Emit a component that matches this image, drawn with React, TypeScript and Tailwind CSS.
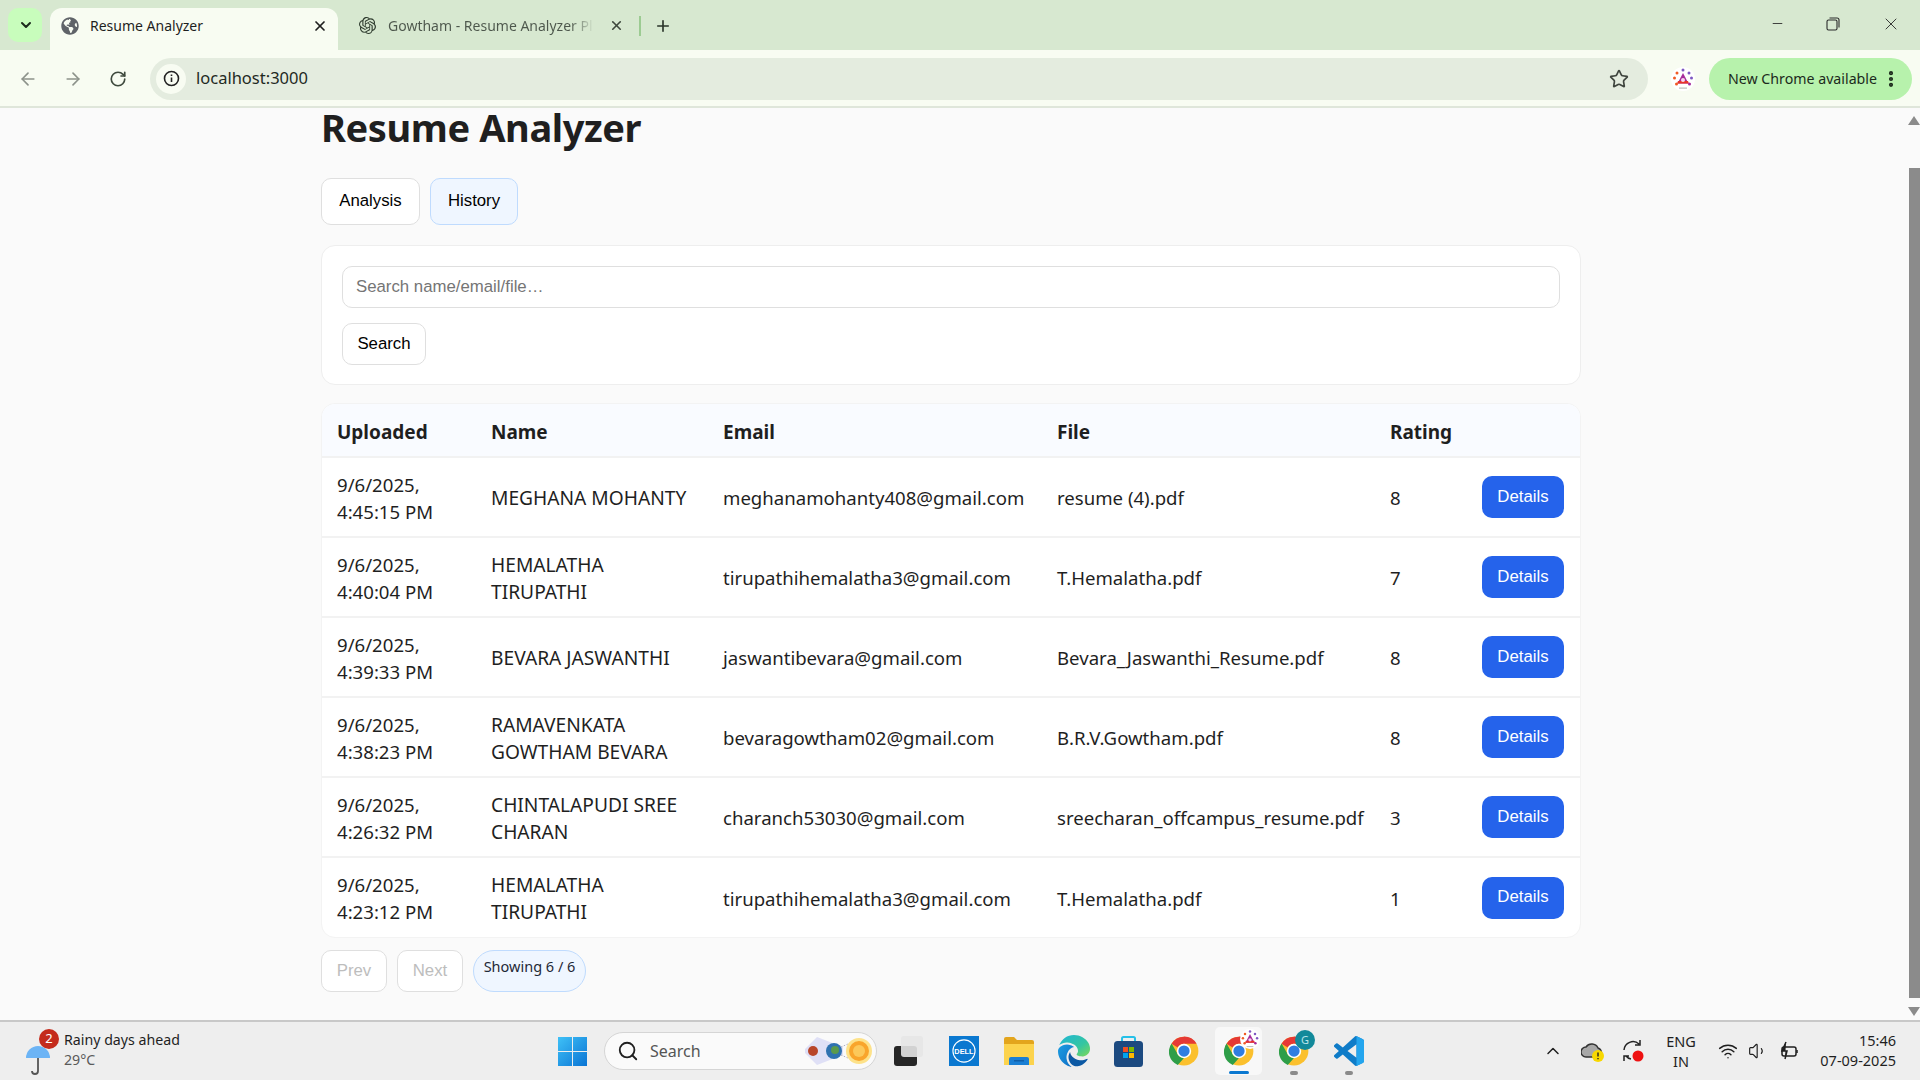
import React from "react";
import { ArrowLeft, ArrowRight, RotateCw, Star, X, Plus, ChevronDown, Minus, Search, ChevronUp, Wifi, Volume1, MoreVertical } from "lucide-react";
import { SiOpenai } from "react-icons/si";
import { FaGlobeAmericas } from "react-icons/fa";

const rows = [
  ["9/6/2025,", "4:45:15 PM", "MEGHANA MOHANTY", "meghanamohanty408@gmail.com", "resume (4).pdf", "8"],
  ["9/6/2025,", "4:40:04 PM", "HEMALATHA TIRUPATHI", "tirupathihemalatha3@gmail.com", "T.Hemalatha.pdf", "7"],
  ["9/6/2025,", "4:39:33 PM", "BEVARA JASWANTHI", "jaswantibevara@gmail.com", "Bevara_Jaswanthi_Resume.pdf", "8"],
  ["9/6/2025,", "4:38:23 PM", "RAMAVENKATA GOWTHAM BEVARA", "bevaragowtham02@gmail.com", "B.R.V.Gowtham.pdf", "8"],
  ["9/6/2025,", "4:26:32 PM", "CHINTALAPUDI SREE CHARAN", "charanch53030@gmail.com", "sreecharan_offcampus_resume.pdf", "3"],
  ["9/6/2025,", "4:23:12 PM", "HEMALATHA TIRUPATHI", "tirupathihemalatha3@gmail.com", "T.Hemalatha.pdf", "1"],
];

function ChromeIcon({ size = 30 }: { size?: number }) {
  return (
    <svg width={size} height={size} viewBox="0 0 48 48" className="shrink-0">
      <circle cx="24" cy="24" r="23" fill="#fbc02d" />
      <path d="M24 1a23 23 0 0 1 20 11.5H24a11.5 11.5 0 0 0-10 5.75L4.1 12.5A23 23 0 0 1 24 1z" fill="#e53935" />
      <path d="M4.1 12.5 14 29.75a11.5 11.5 0 0 0 10 5.75L14 47a23 23 0 0 1-9.9-34.5z" fill="#2e9e48" transform="translate(0 -.5)" />
      <circle cx="24" cy="24" r="11.5" fill="#fff" />
      <circle cx="24" cy="24" r="9" fill="#2f7de1" />
    </svg>
  );
}

function ProfileIcon({ size = 24 }: { size?: number }) {
  return (
    <svg width={size} height={size} viewBox="0 0 24 24" className="shrink-0">
      <circle cx="12" cy="12" r="12" fill="#ffffff" />
      <path d="M12 6l5.5 10.5h-11z" fill="#a52a9b" />
      <path d="M7 14h10l1 2.5H6z" fill="#e8342c" />
      <circle cx="12" cy="13" r="2" fill="#f7d7ef" />
      <circle cx="3.5" cy="11" r="1.5" fill="#f15a24" />
      <circle cx="20.5" cy="11" r="1.5" fill="#7e57c2" />
      <circle cx="6" cy="6" r="1.5" fill="#f15a24" />
      <circle cx="18" cy="6" r="1.5" fill="#7e57c2" />
      <circle cx="12" cy="3" r="1.5" fill="#7e57c2" />
      <circle cx="5.5" cy="17" r="1.5" fill="#f15a24" />
      <circle cx="18.5" cy="17" r="1.5" fill="#a52a9b" />
      <rect x="8" y="20.5" width="8" height="1.2" fill="#bbbbbb" />
    </svg>
  );
}

function TaskSlot({ children, className = "" }: { children: React.ReactNode; className?: string }) {
  return <div className={`relative flex shrink-0 items-center justify-center ${className}`}>{children}</div>;
}

function Tabs() {
  return (
    <div className="flex h-[50px] items-end bg-[#d7e8d0]">
      <div className="mb-[8px] ml-[8px] flex h-[34px] w-[34px] items-center justify-center rounded-[10px] bg-[#c8fdbc] pl-[1px]">
        <ChevronDown size={16} strokeWidth={3} className="text-[#1c2a1c]" />
      </div>
      <div className="ml-[8px] flex h-[42px] w-[288px] items-center rounded-t-[12px] bg-[#f8fcf2] pb-[7px] pl-[11px] pr-[10px]">
        <FaGlobeAmericas size={18} className="text-[#5f6368]" />
        <span className="ml-[11px] flex-1 text-[14px] text-[#1f1f1f]">Resume Analyzer</span>
        <X size={16} strokeWidth={2.6} className="text-[#1f1f1f]" />
      </div>
      <div className="flex h-[42px] items-center pb-[7px]">
        <SiOpenai size={17} className="ml-[21px] text-[#2d3a2d]" />
        <span className="ml-[12px] w-[206px] overflow-hidden whitespace-nowrap bg-gradient-to-r from-[#4d574c] from-[88%] to-[#d7e8d0] bg-clip-text text-[14px] text-transparent">Gowtham - Resume Analyzer Pl</span>
        <X size={15} strokeWidth={2.6} className="ml-[15px] text-[#3d473c]" />
        <div className="ml-[15px] h-[20px] w-[2px] bg-[#9ccb92]" />
        <Plus size={18} strokeWidth={2.2} className="ml-[13px] text-[#2b352a]" />
      </div>
      <div className="flex-1" />
      <div className="flex h-[50px] w-[170px] items-center pb-[3px] text-[#2a2a2a]">
        <Minus size={15} strokeWidth={1.4} className="ml-[20px]" />
        <svg width="14" height="14" viewBox="0 0 14 14" fill="none" stroke="#2a2a2a" strokeWidth="1.1" className="ml-[41px]">
          <rect x="1" y="3" width="10" height="10" rx="1.5" />
          <path d="M3.5 1h7.5A2 2 0 0 1 13 3v7.5" />
        </svg>
        <X size={20} strokeWidth={1.1} className="ml-[41px]" />
      </div>
    </div>
  );
}

function Toolbar() {
  return (
    <div className="flex h-[58px] items-center border-b-[2px] border-[#dfe6da] bg-[#f8fcf2] pt-[1px]">
      <ArrowLeft size={20} className="ml-[18px] text-[#8d938b]" />
      <ArrowRight size={20} className="ml-[25px] text-[#8d938b]" />
      <RotateCw size={18} strokeWidth={2.2} className="ml-[26px] text-[#3f4a3e]" />
      <div className="ml-[23px] flex h-[42px] w-[1498px] items-center rounded-full bg-[#e4ecdf] pl-[6px] pr-[19px]">
        <div className="flex h-[30px] w-[30px] items-center justify-center rounded-full bg-[#f8fcf2]">
          <svg width="17" height="17" viewBox="0 0 17 17" fill="none" stroke="#222" strokeWidth="1.6">
            <circle cx="8.5" cy="8.5" r="7" />
            <path d="M8.5 7.5v4.5M8.5 4.5v1.5" />
          </svg>
        </div>
        <span className="ml-[10px] flex-1 text-[16.5px] text-[#1f2a1f]">localhost:3000</span>
        <Star size={20} strokeWidth={2} className="text-[#3f453e]" />
      </div>
      <div className="ml-[23px]"><ProfileIcon /></div>
      <div className="ml-[14px] flex h-[42px] w-[203px] items-center rounded-full bg-[#b7f2ac] pl-[19px]">
        <span className="w-[150px] whitespace-nowrap text-[14.2px] text-[#1c2a1c]">New Chrome available</span>
        <MoreVertical size={20} strokeWidth={3} className="ml-[3px] text-[#1c2a1c]" />
      </div>
    </div>
  );
}

function Scrollbar() {
  return (
    <div className="flex w-[12px] flex-col items-center bg-[#fafafa]">
      <svg width="12" height="10" viewBox="0 0 12 10" className="mt-[8px]"><path d="M6 0l6 9H0z" fill="#8b8b8b" /></svg>
      <div className="ml-[1px] mt-[42px] h-[830px] w-[11px] bg-[#8b8b8b]" />
      <svg width="12" height="10" viewBox="0 0 12 10" className="mt-[8px]"><path d="M6 10L0 1h12z" fill="#8b8b8b" /></svg>
    </div>
  );
}

function Content() {
  const btn = "rounded-[10px] border border-[#dfdfdf] bg-white text-[16.8px]";
  const arial = { fontFamily: '"Liberation Sans", sans-serif' };
  return (
    <main className="flex-1 overflow-hidden bg-[#fafafa] pl-[321px]" style={{ fontFamily: '"Noto Sans", sans-serif' }}>
      <div className="w-[1260px]">
        <h1 className="h-[38px] text-[38px] font-bold leading-[38px] tracking-[-0.4px] text-[#1f1f1f]">Resume Analyzer</h1>
        <div className="mt-[32px] flex gap-[10px]" style={arial}>
          <div className={`${btn} flex h-[47px] w-[99px] items-center justify-center pb-[1px] text-black`}>Analysis</div>
          <div className="flex h-[47px] w-[88px] items-center justify-center rounded-[10px] border border-[#bfdbfe] bg-[#eff6ff] pb-[1px] text-[16.8px] text-black">History</div>
        </div>
        <section className="mt-[20px] h-[140px] rounded-[14px] border border-[#eeeeee] bg-white px-[20px] pt-[20px]" style={arial}>
          <div className="flex h-[42px] items-center rounded-[10px] border border-[#dfdfdf] pl-[13px] text-[16.8px] text-[#757575]">Search name/email/file…</div>
          <div className={`${btn} mt-[15px] flex h-[42px] w-[84px] items-center justify-center text-black`}>Search</div>
        </section>
        <div className="mt-[18px] overflow-hidden rounded-[14px] border border-[#f3f3f3] bg-white">
          <table className="w-[1258px] table-fixed border-collapse text-left text-[18.6px] leading-[27px] text-[#1f1f1f]">
            <colgroup>
              <col className="w-[154px]" />
              <col className="w-[232px]" />
              <col className="w-[334px]" />
              <col className="w-[333px]" />
              <col className="w-[92px]" />
              <col className="w-[113px]" />
            </colgroup>
            <thead>
              <tr className="h-[53px] border-b-[2px] border-[#f2f2f2] bg-[#f9fbff]">
                {["Uploaded", "Name", "Email", "File", "Rating", ""].map((h, i) => (
                  <th key={i} className="px-[15px] pt-[5px] text-[19px] font-bold">{h}</th>
                ))}
              </tr>
            </thead>
            <tbody>
              {rows.map((r, i) => (
                <tr key={i} className={`h-[80px] ${i < 5 ? "border-b-[2px] border-[#f2f2f2]" : ""}`}>
                  <td className="px-[15px] pt-[1px]">{r[0]}<br />{r[1]}</td>
                  <td className="px-[15px] pt-[1px] text-[19.2px]">{r[2]}</td>
                  <td className="whitespace-nowrap px-[15px] pt-[1px]">{r[3]}</td>
                  <td className="whitespace-nowrap px-[15px] pt-[1px]">{r[4]}</td>
                  <td className="px-[15px] pt-[1px]">{r[5]}</td>
                  <td className="pl-0 pr-[16px]">
                    <div className="ml-auto flex h-[42px] w-[82px] items-center justify-center rounded-[10px] bg-[#2563eb] pb-[2px] text-[16.8px] text-white" style={arial}>Details</div>
                  </td>
                </tr>
              ))}
            </tbody>
          </table>
        </div>
        <div className="mt-[12px] flex gap-[10px]">
          <div className={`${btn} flex h-[42px] w-[66px] items-center justify-center text-[#bdbdbd]`} style={arial}>Prev</div>
          <div className={`${btn} flex h-[42px] w-[66px] items-center justify-center text-[#bdbdbd]`} style={arial}>Next</div>
          <div className="flex h-[42px] w-[113px] items-start justify-center rounded-full border border-[#bfdbfe] bg-[#eff6ff] pt-[5px] text-[14.5px] text-[#1f2937]">Showing 6 / 6</div>
        </div>
      </div>
    </main>
  );
}

function Taskbar() {
  return (
    <footer className="flex h-[60px] items-center border-t-[2px] border-[#c8c8c8] bg-[#eeeeee]" style={{ fontFamily: '"Noto Sans", sans-serif' }}>
      <div className="relative ml-[25px] h-[44px] w-[39px]">
        <svg width="26" height="34" viewBox="0 0 26 34" className="absolute left-0 top-[14px]">
          <path d="M1 15a12 12 0 0 1 24 0z" fill="#6cb4f5" />
          <path d="M13 15v13a3 3 0 0 1-6 0" fill="none" stroke="#555" strokeWidth="1.8" />
        </svg>
        <div className="absolute left-[14px] top-0 flex h-[20px] w-[20px] items-center justify-center rounded-full bg-[#c42b1c] text-[13px] text-white">2</div>
      </div>
      <div className="mb-[2px] w-[494px] text-[14.2px] leading-[20px]">
        <div className="text-[#1f1f1f]">Rainy days ahead</div>
        <div className="text-[#5a5a5a]">29°C</div>
      </div>
      <svg width="29" height="29" viewBox="0 0 29 29" className="shrink-0">
        <defs>
          <linearGradient id="w" x1="0" y1="0" x2="1" y2="1"><stop offset="0" stopColor="#3fc1f7" /><stop offset="1" stopColor="#0a74d4" /></linearGradient>
        </defs>
        <path d="M0 0h14v14H0zM15 0h14v14H15zM0 15h14v14H0zM15 15h14v14H15z" fill="url(#w)" />
      </svg>
      <div className="ml-[17px] flex h-[38px] w-[273px] items-center rounded-full border border-[#d5d5d5] bg-[#fafafa] pl-[12px]">
        <Search size={22} strokeWidth={2} className="text-[#1f1f1f]" />
        <span className="ml-[11px] flex-1 text-[16px] text-[#555]">Search</span>
        <svg width="68" height="34" viewBox="0 0 68 34" className="mr-[3px]">
          <path d="M0 15L12 3l26 10v8L12 31 0 19z" fill="#dfe0f6" />
          <path d="M36 13l14-6M36 21l14 6" stroke="#9a9ab0" strokeWidth=".8" strokeDasharray="1.5 1.5" />
          <circle cx="8" cy="17" r="5" fill="#b8452a" />
          <circle cx="29" cy="17" r="8" fill="#2f72b0" />
          <circle cx="30" cy="16" r="4" fill="#5a9a4c" />
          <circle cx="54" cy="17" r="13" fill="#fde28a" />
          <circle cx="54" cy="17" r="10" fill="#f9a52b" />
          <circle cx="54" cy="17" r="6" fill="#fcc95a" />
        </svg>
      </div>
      <TaskSlot className="ml-[17px] h-[30px] w-[29px]">
        <div className="absolute bottom-0 left-0 h-[20px] w-[23px] rounded-[3px] bg-[#262626]" />
        <div className="absolute right-0 top-0 h-[21px] w-[22px] rounded-[3px] bg-[#e6e6e6]/90" />
      </TaskSlot>
      <TaskSlot className="ml-[26px] h-[30px] w-[30px] bg-[#0a78d0]">
        <svg width="24" height="24" viewBox="0 0 26 26"><circle cx="13" cy="13" r="12" fill="none" stroke="#fff" strokeWidth="1.2" /><text x="13" y="16" textAnchor="middle" fontSize="8" fontWeight="700" fill="#fff" fontFamily="Liberation Sans">DELL</text></svg>
      </TaskSlot>
      <TaskSlot className="ml-[25px] h-[30px] w-[30px]">
        <svg width="30" height="28" viewBox="0 0 30 28">
          <path d="M0 2a2 2 0 0 1 2-2h8l3 3h15a2 2 0 0 1 2 2v5H0z" fill="#e3a51d" />
          <path d="M0 7h30v21H0z" fill="#fcd34d" />
          <path d="M5 28v-6a2 2 0 0 1 2-2h16a2 2 0 0 1 2 2v6z" fill="#1a7fd4" />
          <rect x="10" y="23" width="10" height="1.5" fill="#0f5ea8" />
        </svg>
      </TaskSlot>
      <TaskSlot className="ml-[24px] h-[32px] w-[32px]">
        <svg width="32" height="32" viewBox="0 0 24 24">
          <defs>
            <linearGradient id="e" x1="0" y1="0" x2="1" y2="1"><stop offset="0" stopColor="#1fb6d6" /><stop offset=".6" stopColor="#35c6a0" /><stop offset="1" stopColor="#7ed957" /></linearGradient>
            <linearGradient id="e2" x1="0" y1="0" x2="1" y2="1"><stop offset="0" stopColor="#1b9de2" /><stop offset="1" stopColor="#0f6cc4" /></linearGradient>
          </defs>
          <path d="M21.86 17.86q.14 0 .25.12.1.13.1.25t-.11.33l-.32.46-.43.53-.44.5q-.21.25-.38.42l-.22.23q-.58.53-1.34 1.04-.76.51-1.6.91-.86.4-1.74.64t-1.67.24q-.9 0-1.69-.28-.8-.28-1.48-.78-.68-.5-1.22-1.17-.53-.66-.92-1.44-.38-.77-.58-1.6-.2-.83-.2-1.67 0-1 .32-1.96.33-.97.87-1.8.14.95.55 1.77.41.82 1.02 1.5.6.68 1.38 1.21.78.54 1.64.9.86.36 1.77.56.92.2 1.8.2 1.12 0 2.18-.24 1.06-.23 2.06-.72l.2-.1.2-.05z" fill="#0c59a4" />
          <path d="M6.36 16.59q0 1.1.27 2.15.27 1.06.78 2.03.51.96 1.24 1.77.74.82 1.66 1.4-1.47-.2-2.8-.74-1.33-.55-2.48-1.37-1.15-.83-2.08-1.9-.92-1.07-1.58-2.33T.36 14.94Q0 13.54 0 12.06q0-.81.32-1.49.31-.68.83-1.23.53-.55 1.2-.96.66-.4 1.35-.66.74-.27 1.5-.39.78-.12 1.55-.12.7 0 1.42.1.72.12 1.4.35.68.23 1.32.57.63.35 1.16.83-.35 0-.7.07-.33.07-.65.23v-.02q-.63.28-1.2.74-.57.46-1.05 1.04-.48.58-.87 1.26-.38.67-.65 1.39-.27.71-.42 1.44-.15.72-.15 1.38z" fill="url(#e2)" />
          <path d="M11.96.06q1.7 0 3.33.39 1.63.38 3.07 1.15 1.43.77 2.62 1.93 1.18 1.16 1.98 2.7.49.94.76 1.96.28 1 .28 2.08 0 .89-.23 1.7-.24.8-.69 1.48-.45.68-1.1 1.22-.64.53-1.45.88-.54.24-1.11.36-.58.13-1.16.13-.42 0-.97-.03-.54-.03-1.1-.12-.55-.1-1.05-.28-.5-.19-.84-.5-.12-.09-.23-.24-.1-.16-.1-.33 0-.15.16-.35.16-.2.35-.5.2-.28.36-.68.16-.4.16-.95 0-1.06-.4-1.96-.4-.91-1.06-1.64-.66-.74-1.52-1.28-.86-.55-1.79-.89-.84-.3-1.72-.44-.87-.14-1.76-.14-1.55 0-3.06.45T.94 7.55q.71-1.74 1.81-3.13 1.1-1.38 2.52-2.35Q6.68 1.1 8.37.58q1.7-.52 3.58-.52z" fill="url(#e)" />
        </svg>
      </TaskSlot>
      <TaskSlot className="ml-[24px] h-[32px] w-[29px]">
        <svg width="29" height="32" viewBox="0 0 29 32">
          <path d="M8 8V3.5A1.5 1.5 0 0 1 9.5 2h10A1.5 1.5 0 0 1 21 3.500V8" fill="none" stroke="#25c0e8" strokeWidth="2" />
          <rect x="0" y="6" width="29" height="26" rx="3.500" fill="#1c4a80" />
          <rect x="9" y="12" width="5" height="5" fill="#f25022" /><rect x="15" y="12" width="5" height="5" fill="#7fba00" />
          <rect x="9" y="18" width="5" height="5" fill="#00a4ef" /><rect x="15" y="18" width="5" height="5" fill="#ffb900" />
        </svg>
      </TaskSlot>
      <TaskSlot className="ml-[26px] h-[30px] w-[30px]"><ChromeIcon /></TaskSlot>
      <TaskSlot className="ml-[16px] h-[48px] w-[47px] rounded-[5px] bg-[#f8f8f8]">
        <ChromeIcon />
        <div className="absolute right-[2px] top-[2px]"><ProfileIcon size={20} /></div>
        <div className="absolute bottom-[1px] h-[3px] w-[20px] rounded-full bg-[#0a78d0]" />
      </TaskSlot>
      <TaskSlot className="ml-[17px] h-[48px] w-[30px]">
        <ChromeIcon />
        <div className="absolute right-[-6px] top-[3px] flex h-[20px] w-[20px] items-center justify-center rounded-full bg-[#12899a] text-[11px] text-[#b9e4ea]">G</div>
        <div className="absolute bottom-0 h-[4px] w-[8px] rounded-full bg-[#8a8a8a]" />
      </TaskSlot>
      <TaskSlot className="ml-[25px] h-[48px] w-[30px]">
        <svg width="30" height="30" viewBox="0 0 24 24">
          <path d="M23.15 2.587L18.21.21a1.494 1.494 0 0 0-1.705.29l-9.46 8.63-4.12-3.128a.999.999 0 0 0-1.276.057L.327 7.261A1 1 0 0 0 .326 8.74L3.899 12 .326 15.26a1 1 0 0 0 .001 1.479L1.65 17.94a.999.999 0 0 0 1.276.057l4.12-3.128 9.46 8.63a1.492 1.492 0 0 0 1.704.29l4.942-2.377A1.5 1.5 0 0 0 24 20.06V3.939a1.5 1.5 0 0 0-.85-1.352zm-5.146 14.861L10.826 12l7.178-5.448v10.896z" fill="#0f7cc8" />
          <path d="M18 0v6.55V17.45 24l5.15-2.47A1.5 1.5 0 0 0 24 20.060V3.94a1.5 1.5 0 0 0-.85-1.350L18.2.2z" fill="#23a5ee" />
        </svg>
        <div className="absolute bottom-0 h-[4px] w-[8px] rounded-full bg-[#8a8a8a]" />
      </TaskSlot>
      <ChevronUp size={20} strokeWidth={1.8} className="ml-[179px] text-[#1f1f1f]" />
      <svg width="24" height="24" viewBox="0 0 24 24" className="ml-[18px]">
        <path d="M5 18a5 5 0 0 1 0-10 7 7 0 0 1 12 1 5 5 0 0 1 1 9z" fill="#a8a8a8" stroke="#333" strokeWidth="1.5" />
        <circle cx="17" cy="17" r="6" fill="#f8d800" />
        <path d="M17 13.5v4M17 19v1.2" stroke="#222" strokeWidth="1.4" />
      </svg>
      <svg width="24" height="24" viewBox="0 0 24 24" fill="none" className="ml-[16px]">
        <path d="M3 11a9 9 0 0 1 15-6M19 1v5h-5M10 20a8 8 0 0 1-5-3M3 22v-5h5" stroke="#222" strokeWidth="1.5" />
        <circle cx="17" cy="17" r="5.500" fill="#ee1111" />
      </svg>
      <div className="ml-[19px] w-[34px] text-center text-[14.5px] leading-[20px] text-[#1f1f1f]">ENG<br />IN</div>
      <Wifi size={20} strokeWidth={1.8} className="ml-[20px] text-[#1f1f1f]" />
      <Volume1 size={20} strokeWidth={1.4} className="ml-[10px] text-[#1f1f1f]" />
      <svg width="22" height="20" viewBox="0 0 22 20" fill="none" stroke="#1f1f1f" strokeWidth="1.5" className="ml-[10px]">
        <rect x="4" y="6" width="14" height="9" rx="2" />
        <path d="M19 9v3" />
        <path d="M8 1L4 10h5l-2 8" fill="#1f1f1f" />
      </svg>
      <div className="mb-[2px] ml-auto mr-[24px] text-right text-[14.5px] leading-[20px] text-[#1f1f1f]">
        <div>15:46</div>
        <div>07-09-2025</div>
      </div>
    </footer>
  );
}

export default function App() {
  return (
    <div className="flex h-[1080px] w-[1920px] flex-col overflow-hidden" style={{ fontFamily: '"Noto Sans", sans-serif' }}>
      <Tabs />
      <Toolbar />
      <div className="flex h-[912px]">
        <Content />
        <Scrollbar />
      </div>
      <Taskbar />
    </div>
  );
}
